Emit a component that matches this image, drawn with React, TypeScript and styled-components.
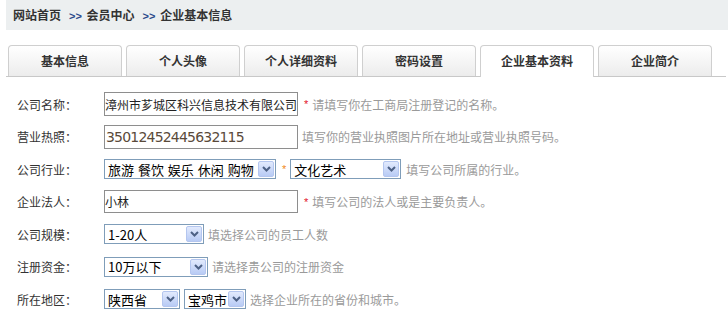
import React from 'react'
import styled, { createGlobalStyle } from 'styled-components'

const Global = createGlobalStyle`
  body {
    margin: 0;
    background: #fff;
    font-family: "Noto Sans CJK SC", "Liberation Sans", sans-serif;
    font-size: 12px;
    color: #333;
  }
`

const Page = styled.div`
  width: 728px;
  height: 311px;
  overflow: hidden;
`

const Crumbs = styled.div`
  margin-left: 6px;
  height: 30px;
  line-height: 30px;
  padding-left: 7px;
  background: #eceff0;
  font-weight: bold;
  color: #333;
  display: flex;
  gap: 8px;
`

const Sep = styled.span`
  color: #2b4a8a;
  font-family: "Liberation Sans", sans-serif;
  font-size: 11px;
  margin-right: 2px;
`

const TabBar = styled.div`
  margin: 15px 2px 0 6px;
  padding-left: 2px;
  display: flex;
  gap: 4px;
  border-bottom: 1px solid #c8c8c8;
`

const Tab = styled.div<{ $active?: boolean }>`
  width: 112px;
  line-height: 30px;
  text-align: center;
  font-weight: bold;
  color: #333;
  border: 1px solid #cfcfcf;
  border-bottom: none;
  border-radius: 4px 4px 0 0;
  background: ${p => (p.$active ? '#fff' : 'linear-gradient(#ffffff, #ececec)')};
  margin-bottom: ${p => (p.$active ? '-1px' : '0')};
  height: ${p => (p.$active ? '31px' : '30px')};
`

const Form = styled.div`
  padding-top: 11px;
`

const Row = styled.div`
  height: 32.5px;
  display: flex;
  align-items: center;
`

const Label = styled.div`
  flex-shrink: 0;
  width: 87px;
  padding-left: 17px;
  color: #333;
`

const TextBox = styled.div<{ $h: number; $big?: boolean }>`
  box-sizing: border-box;
  flex-shrink: 0;
  width: 194px;
  height: ${p => p.$h}px;
  border: 1px solid #8e8e8e;
  display: flex;
  align-items: center;
  padding-left: ${p => (p.$big ? '1px' : '0')};
  white-space: nowrap;
  overflow: hidden;
  font-size: ${p => (p.$big ? '14px' : '12px')};
  font-family: ${p => (p.$big ? '"DejaVu Sans", Verdana, sans-serif' : 'inherit')};
  color: ${p => (p.$big ? '#5a4a3a' : '#222')};
  letter-spacing: ${p => (p.$big ? '-0.8px' : '0')};
`

const Select = styled.div<{ $w: number; $gap?: number }>`
  box-sizing: border-box;
  flex-shrink: 0;
  width: ${p => p.$w}px;
  height: 20px;
  margin-left: ${p => p.$gap ?? 0}px;
  border: 1px solid #7f9db9;
  display: flex;
  align-items: center;
  justify-content: space-between;
  padding: 0 1px 0 3px;
  color: #000;
  font-size: 13px;
  white-space: pre;
  word-spacing: 1px;
`

const DropBtn = styled.span`
  box-sizing: border-box;
  flex-shrink: 0;
  width: 16px;
  height: 16px;
  border: 1px solid #b4c6ef;
  border-radius: 2px;
  background: linear-gradient(#e2eafd, #b8cbf5);
  display: flex;
  align-items: center;
  justify-content: center;
`

const Star = styled.span<{ $c: string }>`
  color: ${p => p.$c};
  margin: 0 4px 0 6px;
  font-family: "Liberation Sans", sans-serif;
  font-size: 11px;
`

const Hint = styled.span<{ $gap?: number }>`
  color: #9a9a9a;
  white-space: nowrap;
  margin-left: ${p => p.$gap ?? 0}px;
`

const Chevron = () => (
  <svg width="9" height="6" viewBox="0 0 9 6">
    <path d="M1 1 L4.5 4.5 L8 1" fill="none" stroke="#4d6185" strokeWidth="2" />
  </svg>
)

const Drop: React.FC<{ w: number; gap?: number; text: string }> = ({ w, gap, text }) => (
  <Select $w={w} $gap={gap}>
    <span>{text}</span>
    <DropBtn><Chevron /></DropBtn>
  </Select>
)

const tabs = ['基本信息', '个人头像', '个人详细资料', '密码设置', '企业基本资料', '企业简介']

export default function App() {
  return (
    <Page>
      <Global />
      <Crumbs>
        <span>网站首页</span>
        <span><Sep>&gt;&gt;</Sep> 会员中心</span>
        <span><Sep>&gt;&gt;</Sep> 企业基本信息</span>
      </Crumbs>
      <TabBar>
        {tabs.map(t => (
          <Tab key={t} $active={t === '企业基本资料'}>{t}</Tab>
        ))}
      </TabBar>
      <Form>
        <Row>
          <Label>公司名称：</Label>
          <TextBox $h={24}>漳州市芗城区科兴信息技术有限公司</TextBox>
          <Star $c="#e2102a">*</Star>
          <Hint>请填写你在工商局注册登记的名称。</Hint>
        </Row>
        <Row>
          <Label>营业热照：</Label>
          <TextBox $h={24} $big>35012452445632115</TextBox>
          <Hint $gap={4}>填写你的营业执照图片所在地址或营业执照号码。</Hint>
        </Row>
        <Row>
          <Label>公司行业：</Label>
          <Drop w={172} text="旅游 餐饮 娱乐 休闲 购物" />
          <Star $c="#f08a1a">*</Star>
          <Drop w={111} text="文化艺术" />
          <Hint $gap={5}>填写公司所属的行业。</Hint>
        </Row>
        <Row>
          <Label>企业法人：</Label>
          <TextBox $h={23}>小林</TextBox>
          <Star $c="#e2102a">*</Star>
          <Hint>填写公司的法人或是主要负责人。</Hint>
        </Row>
        <Row>
          <Label>公司规模：</Label>
          <Drop w={100} text="1-20人" />
          <Hint $gap={4}>填选择公司的员工人数</Hint>
        </Row>
        <Row>
          <Label>注册资金：</Label>
          <Drop w={104} text="10万以下" />
          <Hint $gap={4}>请选择贵公司的注册资金</Hint>
        </Row>
        <Row>
          <Label>所在地区：</Label>
          <Drop w={76} text="陕西省" />
          <Drop w={62} gap={4} text="宝鸡市" />
          <Hint $gap={4}>选择企业所在的省份和城市。</Hint>
        </Row>
      </Form>
    </Page>
  )
}
